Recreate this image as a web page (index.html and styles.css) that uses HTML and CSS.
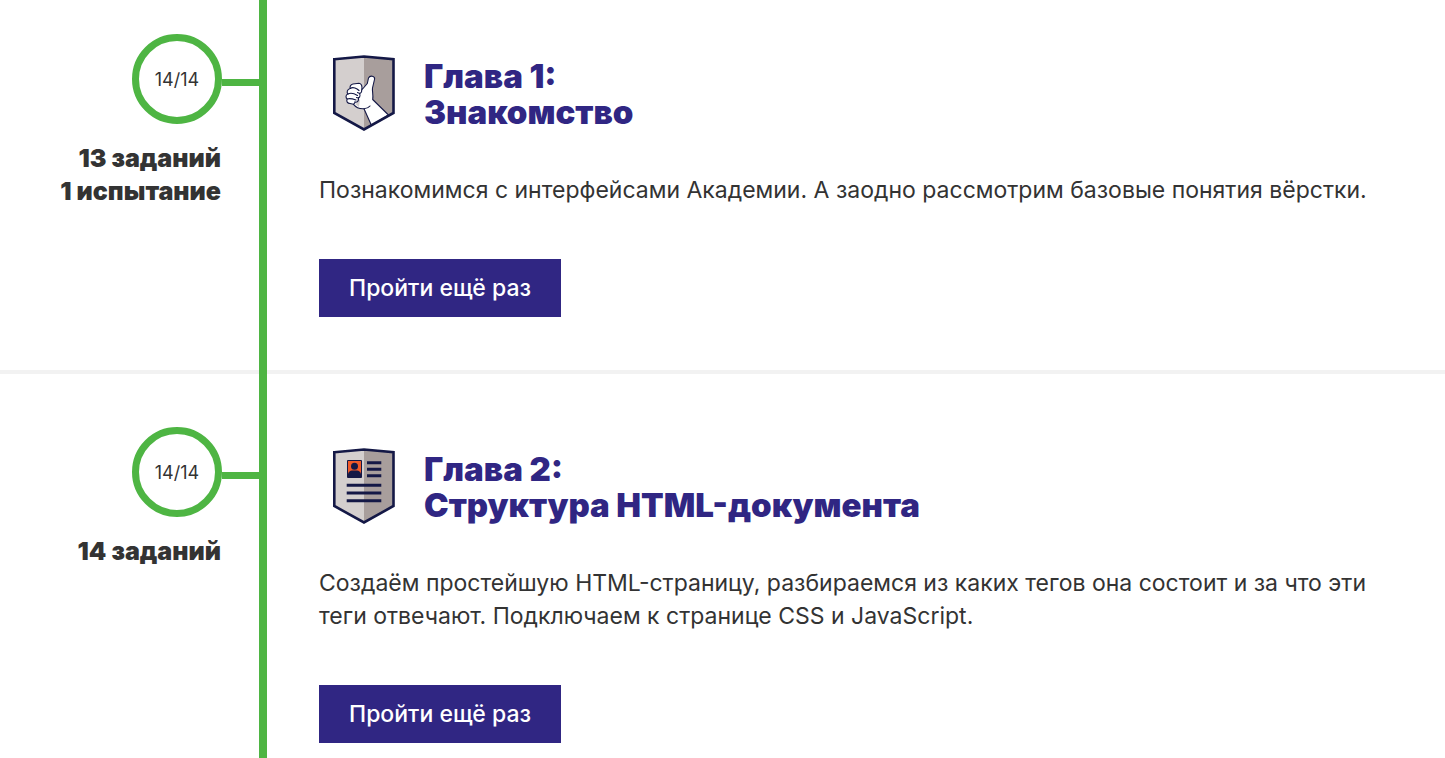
FILE: index.html
```html
<!DOCTYPE html>
<html lang="ru">
<head>
<meta charset="utf-8">
<meta name="viewport" content="width=device-width, initial-scale=1">
<title>Главы курса</title>
<link rel="stylesheet" href="styles.css">
</head>
<body>
<main class="chapters">
  <section class="chapter">
    <div class="progress">
      <div class="progress-row">
        <span class="progress-circle">14/14</span>
        <span class="progress-link"></span>
      </div>
      <p class="progress-text">13 заданий<br>1 испытание</p>
    </div>
    <div class="rail"></div>
    <div class="content">
      <header class="chapter-header">
        <svg class="badge" viewBox="0 0 90 90" aria-hidden="true">
          <path fill="#d4cfce" d="M15.300 10.200 45 7.500v73L15.300 64z"/>
          <path fill="#a89e9c" d="M45 7.500l29.500 2.700V64L45 80.500z"/>
          <path fill="#fff" stroke="#141846" stroke-width="1.100" stroke-linejoin="round" d="M45 59.700 52.500 76.500 69.500 66 53.700 50.500C54.500 46 53 42 53.500 39L55.600 30C56 27 51 26 49.500 29L48.300 34.500 42.700 41C43.500 37 42.500 34.500 40 34.300L34 35C31.500 35.500 30.500 38 31.300 39.500 28 40 27.500 43.500 29 45 26.500 45.500 26.500 49 28.200 50 27 52.500 28.500 54.300 31 54.500L34.500 55.300C37 58.500 41 60 45 59.700z"/>
          <path fill="#d4cfce" d="M38 49l3 2-1 7-4-3 2-1z"/>
          <path fill="none" stroke="#141846" stroke-width="1.100" stroke-linecap="round" stroke-linejoin="round" d="M31.300 39.500C34 37.500 38 39.500 40 41.500M29 45C32 43.500 36 45 38.500 46.500M28.200 50C31 49 34 50 37 51M42.700 41C43 44 41 45 38.500 43.500M40.500 44.500C42 47 40.500 49.500 37.500 48.500M39.500 49C40 52 38.500 53.500 35.500 53M34.500 55.300l2-2.300M45 59.700Q49 59.500 51 57"/>
          <path fill="none" stroke="#141846" stroke-width="2.600" d="M15.300 10.200 45 7.500l29.500 2.700V64L45 80.500 15.300 64z"/>
        </svg>
        <h2 class="chapter-title">Глава 1:<br>Знакомство</h2>
      </header>
      <p class="chapter-text">Познакомимся с интерфейсами Академии. А заодно рассмотрим базовые понятия вёрстки.</p>
      <a class="button" href="#chapter-1">Пройти ещё раз</a>
    </div>
  </section>
  <section class="chapter">
    <div class="progress">
      <div class="progress-row">
        <span class="progress-circle">14/14</span>
        <span class="progress-link"></span>
      </div>
      <p class="progress-text">14 заданий</p>
    </div>
    <div class="rail"></div>
    <div class="content">
      <header class="chapter-header">
        <svg class="badge" viewBox="0 0 90 90" aria-hidden="true">
          <path fill="#d4cfce" d="M15.300 10.200 45 7.500v73L15.300 64z"/>
          <path fill="#a89e9c" d="M45 7.500l29.500 2.700V64L45 80.500z"/>
          <path fill="#f15a29" stroke="#141846" d="M28.500 18.500h14v17h-14z"/>
          <circle cx="35.500" cy="24.300" r="3.500" fill="#141846"/>
          <path fill="#141846" d="M29 35v-3q1-3.500 4-3.500h5q3 0 4 3.500v3z"/>
          <path fill="none" stroke="#141846" stroke-width="3" d="M48 20.700h14.300M48 27.300h14.300M48 33.700h14.300M27.700 43.300h34.600M27.700 51h34.600M27.700 58.700h34.600"/>
          <path fill="none" stroke="#141846" stroke-width="2.600" d="M15.300 10.200 45 7.500l29.500 2.700V64L45 80.500 15.300 64z"/>
        </svg>
        <h2 class="chapter-title">Глава 2:<br>Структура HTML-документа</h2>
      </header>
      <p class="chapter-text">Создаём простейшую HTML-страницу, разбираемся из каких тегов она состоит и за что эти теги отвечают. Подключаем к странице CSS и JavaScript.</p>
      <a class="button" href="#chapter-2">Пройти ещё раз</a>
    </div>
  </section>
</main>
</body>
</html>
```
FILE: styles.css
```css
* {
  box-sizing: border-box;
}

body {
  margin: 0;
  background: #fff;
  color: #333;
  font: 400 23px/33px Inter, "Open Sans", sans-serif;
}

.chapter {
  display: grid;
  grid-template-columns: 259px 8px 1fr;
}

.rail {
  background: #4eb543;
}

.progress,
.content {
  padding-top: 53px;
  padding-bottom: 53px;
  border-bottom: 4px solid #f2f2f2;
}

.chapter:first-child .progress,
.chapter:first-child .content {
  padding-top: 34px;
}

.chapter:last-child .progress,
.chapter:last-child .content {
  padding-bottom: 15px;
  border-bottom: 0;
}

.progress-row {
  display: flex;
  align-items: center;
  justify-content: flex-end;
}

.progress-circle {
  display: flex;
  align-items: center;
  justify-content: center;
  width: 90px;
  height: 90px;
  border: 7px solid #4eb543;
  border-radius: 50%;
  font-size: 18px;
}

.progress-link {
  width: 37px;
  height: 7px;
  margin-top: 7px;
  background: #4eb543;
}

.progress-text {
  margin: 18px 38px 0 0;
  font-size: 25px;
  font-weight: 900;
  text-align: right;
}

.content {
  padding-left: 52px;
  padding-right: 52px;
}

.chapter-header {
  display: flex;
  align-items: center;
  gap: 15px;
  margin: 15px 0 35px;
}

.badge {
  flex: none;
  width: 90px;
  height: 90px;
}

.chapter-title {
  margin: 0;
  color: #302683;
  font-size: 33px;
  font-weight: 900;
  line-height: 36px;
}

.chapter-text {
  margin: 0 0 52px;
}

.button {
  display: inline-block;
  padding: 13px 30px 12px;
  background: #302683;
  color: #fff;
  font-weight: 500;
  text-decoration: none;
  vertical-align: top;
}
```
